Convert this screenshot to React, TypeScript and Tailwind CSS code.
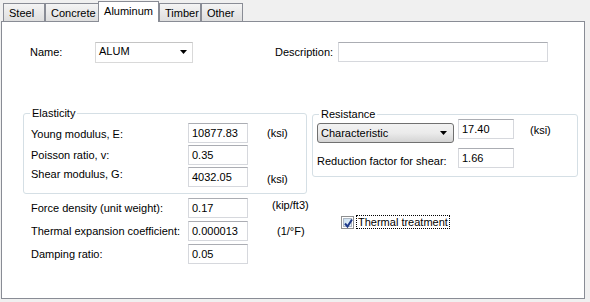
import React from "react";

const font = { fontFamily: '"Liberation Sans", Arial, sans-serif' };

function Field({ value, w = "w-[60px]", h = "h-[20px]" }: { value: string; w?: string; h?: string }) {
  return (
    <div
      className={`${w} ${h} shrink-0 bg-white border border-[#d6d8dd] border-t-[#abadb3] pl-[3px] flex items-center leading-none text-[11px] text-black`}
    >
      {value}
    </div>
  );
}

function Arrow() {
  return (
    <svg width="7" height="4" viewBox="0 0 7 4" className="shrink-0">
      <path d="M0 0 H7 L3.5 4 Z" fill="#000" />
    </svg>
  );
}

function Tab({ label, selected, w }: { label: string; selected?: boolean; w: string }) {
  if (selected) {
    return (
      <div
        className={`${w} h-[21px] -ml-[2px] -mb-[1px] relative z-10 bg-white border border-b-0 border-[#898c95] flex items-start justify-center pt-[3px] text-[11px]`}
      >
        {label}
      </div>
    );
  }
  return (
    <div
      className={`${w} h-[18px] shrink-0 bg-gradient-to-b from-[#f4f4f4] to-[#dedede] border border-b-0 border-[#898c95] flex items-start pl-[5px] pt-[3px] text-[11px]`}
    >
      {label}
    </div>
  );
}

export default function App() {
  return (
    <div className="w-[590px] h-[302px] bg-[#f0f0f0] text-black text-[11px] leading-[13px] overflow-hidden" style={font}>
      {/* Tabs */}
      <div className="h-[21px] flex items-end pl-[3px] relative z-10">
        <Tab label="Steel" w="w-[42px]" />
        <Tab label="Concrete" w="w-[55px]" />
        <Tab label="Aluminum" selected w="w-[61px]" />
        <Tab label="Timber" w="w-[42px]" />
        <Tab label="Other" w="w-[42px]" />
      </div>

      {/* Panel */}
      <div className="ml-[1px] w-[584px] h-[278px] bg-white border border-[#898c95] flex flex-col">
        {/* Name row */}
        <div className="flex items-center mt-[20px] h-[20px]">
          <span className="ml-[28px] w-[65px] shrink-0">Name:</span>
          <div className="w-[98px] h-[21px] shrink-0 bg-white border border-[#d9d9d9] border-t-[#c4c4c4] flex items-center justify-between pl-[3px] pr-[5px]">
            <span className="-mt-[2px]">ALUM</span>
            <Arrow />
          </div>
          <span className="ml-[82px] w-[63px] shrink-0">Description:</span>
          <Field value="" w="w-[210px]" />
        </div>

        {/* Group boxes */}
        <div className="flex items-start mt-[45px]">
          <fieldset className="ml-[21px] w-[284px] border border-[#d5dfe5] rounded-[3px] pb-[6px]">
            <legend className="ml-[6px] px-[2px] leading-[13px]">Elasticity</legend>
            <div className="flex flex-col gap-[2px] pt-[3px]">
              <div className="flex items-center h-[20px]">
                <span className="ml-[7px] w-[157px] shrink-0 pt-[3px]">Young modulus, E:</span>
                <Field value="10877.83" />
                <span className="ml-[19px]">(ksi)</span>
              </div>
              <div className="flex items-center h-[20px]">
                <span className="ml-[7px] w-[157px] shrink-0">Poisson ratio, v:</span>
                <Field value="0.35" />
              </div>
              <div className="flex items-center h-[20px]">
                <span className="ml-[7px] w-[157px] shrink-0 -mt-[5px]">Shear modulus, G:</span>
                <Field value="4032.05" />
                <span className="ml-[19px] mt-[5px]">(ksi)</span>
              </div>
            </div>
          </fieldset>

          <fieldset className="ml-[5px] mt-[1px] w-[266px] border border-[#d5dfe5] rounded-[3px] pb-[8px]">
            <legend className="ml-[6px] px-[2px] leading-[13px]">Resistance</legend>
            <div className="flex flex-col -mt-[2px]">
              <div className="flex items-start">
                <div className="ml-[4px] mt-[4px] w-[137px] h-[20px] shrink-0 rounded-[3px] border border-[#707070] bg-gradient-to-b from-[#f2f2f2] via-[#ebebeb] to-[#d4d4d4] flex items-center justify-between pl-[3px] pr-[6px]">
                  <span>Characteristic</span>
                  <Arrow />
                </div>
                <div className="ml-[4px]">
                  <Field value="17.40" w="w-[56px]" />
                </div>
                <span className="ml-[16px] mt-[5px]">(ksi)</span>
              </div>
              <div className="flex items-center mt-[5px] h-[20px]">
                <span className="ml-[4px] w-[141px] shrink-0 pt-[6px]">Reduction factor for shear:</span>
                <Field value="1.66" w="w-[56px]" />
              </div>
            </div>
          </fieldset>
        </div>

        {/* Bottom section */}
        <div className="flex items-start mt-[4px]">
          <div className="w-[318px] shrink-0 flex flex-col gap-[3px]">
            <div className="flex items-center h-[20px]">
              <span className="ml-[29px] w-[157px] shrink-0">Force density (unit weight):</span>
              <Field value="0.17" />
              <span className="ml-[24px] -mt-[5px]">(kip/ft3)</span>
            </div>
            <div className="flex items-center h-[20px]">
              <span className="ml-[29px] w-[157px] shrink-0">Thermal expansion coefficient:</span>
              <Field value="0.000013" />
              <span className="ml-[29px]">(1/°F)</span>
            </div>
            <div className="flex items-center h-[20px]">
              <span className="ml-[29px] w-[157px] shrink-0">Damping ratio:</span>
              <Field value="0.05" />
            </div>
          </div>
          <div className="ml-[21px] mt-[17px] flex items-center">
            <div className="w-[13px] h-[13px] shrink-0 border border-[#8e8f8f] bg-white p-[1px]">
              <div className="w-full h-full bg-gradient-to-br from-[#cbe0f0] to-[#e9f3fb] border border-[#aeb8c4] relative">
                <svg width="11" height="11" viewBox="0 0 11 11" className="absolute -left-[1px] -top-[1px]">
                  <path d="M2 5.5 L4.5 8.5 L9 1.5" stroke="#1e3a8a" strokeWidth="2" fill="none" />
                </svg>
              </div>
            </div>
            <span className="ml-[2px] px-[1px] h-[14px] border border-dotted border-black flex items-center leading-none">
              Thermal treatment
            </span>
          </div>
        </div>
      </div>
    </div>
  );
}
